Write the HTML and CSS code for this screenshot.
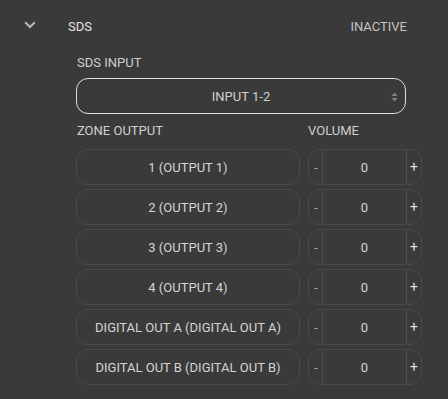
FILE: index.html
```html
<!DOCTYPE html>
<html>
<head>
<meta charset="utf-8">
<link rel="stylesheet" href="styles.css">
</head>
<body>
<div class="panel">
  <div class="header">
    <span class="chev"><svg width="12" height="8" viewBox="0 0 12 8"><path d="M1.2 1.2 L6 6 L10.8 1.2" fill="none" stroke="#b9b9b9" stroke-width="2"/></svg></span>
    <span class="title">SDS</span>
    <span class="status">INACTIVE</span>
  </div>
  <div class="content">
    <div class="label">SDS INPUT</div>
    <div class="select">
      <span>INPUT 1-2</span>
      <svg class="updown" width="7" height="10" viewBox="0 0 7 10"><path d="M3.5 0.5 L6.5 4 L0.5 4 Z M3.5 9.5 L6.5 6 L0.5 6 Z" fill="#7b808c"/></svg>
    </div>
    <div class="grid">
      <div class="colhead label-z">ZONE OUTPUT</div>
      <div class="colhead">VOLUME</div>

      <div class="name">1 (OUTPUT 1)</div>
      <div class="vol"><span class="minus">-</span><span class="val">0</span><span class="plus">+</span></div>

      <div class="name">2 (OUTPUT 2)</div>
      <div class="vol"><span class="minus">-</span><span class="val">0</span><span class="plus">+</span></div>

      <div class="name">3 (OUTPUT 3)</div>
      <div class="vol"><span class="minus">-</span><span class="val">0</span><span class="plus">+</span></div>

      <div class="name">4 (OUTPUT 4)</div>
      <div class="vol"><span class="minus">-</span><span class="val">0</span><span class="plus">+</span></div>

      <div class="name">DIGITAL OUT A (DIGITAL OUT A)</div>
      <div class="vol"><span class="minus">-</span><span class="val">0</span><span class="plus">+</span></div>

      <div class="name">DIGITAL OUT B (DIGITAL OUT B)</div>
      <div class="vol"><span class="minus">-</span><span class="val">0</span><span class="plus">+</span></div>
    </div>
  </div>
</div>
</body>
</html>
```
FILE: styles.css
```css
html, body {
  margin: 0;
  padding: 0;
  background: #3a3a3a;
}
body {
  width: 448px;
  height: 399px;
  overflow: hidden;
  font-family: Roboto, "Liberation Sans", sans-serif;
  font-size: 13px;
  color: #d2d2d2;
}
.header {
  height: 48px;
  display: grid;
  grid-template-columns: 44px 1fr auto;
  align-items: center;
  padding: 2px 41px 0 24px;
}
.chev {
  display: flex;
  align-items: center;
  height: 8px;
  margin-top: -3px;
}
.title {
  color: #e4e4e4;
}
.status {
  color: #c4c4c4;
}
.content {
  padding-left: 76px;
  padding-top: 5px;
}
.label {
  line-height: 16px;
  height: 16px;
  padding-left: 1px;
  color: #cfcfcf;
}
.select {
  margin-top: 7px;
  width: 330px;
  height: 36px;
  box-sizing: border-box;
  border: 1px solid #dedede;
  border-radius: 12px;
  display: flex;
  align-items: center;
  justify-content: center;
  position: relative;
  color: #cfcfcf;
}
.updown {
  position: absolute;
  right: 7px;
  top: 13px;
}
.grid {
  display: grid;
  grid-template-columns: 224px 114px;
  column-gap: 8px;
  row-gap: 4px;
  margin-top: 9px;
}
.colhead {
  line-height: 16px;
  height: 16px;
  margin-bottom: 6px;
  color: #cfcfcf;
}
.label-z {
  padding-left: 1px;
}
.name {
  height: 36px;
  box-sizing: border-box;
  border: 1px solid #4a4a4a;
  border-radius: 12px;
  display: flex;
  align-items: center;
  justify-content: center;
  color: #d4d4d4;
}
.vol {
  height: 36px;
  box-sizing: border-box;
  border: 1px solid #4a4a4a;
  border-radius: 12px;
  display: flex;
  align-items: stretch;
}
.minus, .plus {
  width: 12px;
  display: flex;
  align-items: center;
  justify-content: center;
}
.minus {
  color: #a8a8a8;
  padding-left: 1px;
}
.plus {
  width: 14px;
  color: #dcdcdc;
  font-size: 14px;
}
.val {
  flex: 1;
  border-left: 1px solid #4e4e4e;
  border-right: 1px solid #4e4e4e;
  display: flex;
  align-items: center;
  justify-content: center;
  color: #d4d4d4;
}
```
